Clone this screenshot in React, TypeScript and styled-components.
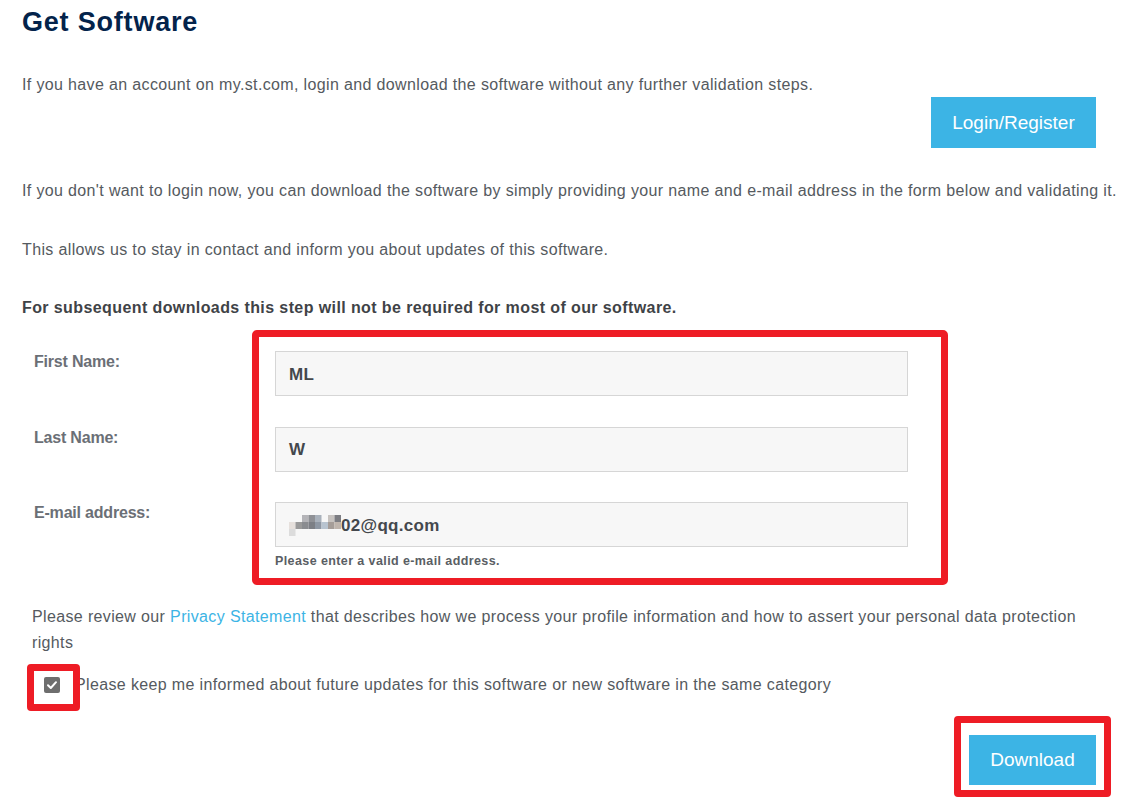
import React from "react";
import styled, { createGlobalStyle } from "styled-components";

const GlobalStyle = createGlobalStyle`
  html, body { margin: 0; padding: 0; background: #ffffff; }
  body { font-family: "Liberation Sans", Arial, sans-serif; color: #555a60; }
  * { box-sizing: border-box; }
`;

const RED = "#ee1c25";
const BLUE = "#3cb4e5";

const Page = styled.div`
  width: 1132px;
  padding: 7px 10px 30px 22px;
`;

const Title = styled.h1`
  margin: 0;
  font-size: 27px;
  line-height: 30px;
  font-weight: 700;
  letter-spacing: 0.8px;
  color: #03234b;
`;

const Text = styled.p<{ $top: number; $bold?: boolean }>`
  margin: ${(p) => p.$top}px 0 0 0;
  font-size: 16px;
  line-height: 20px;
  letter-spacing: ${(p) => (p.$bold ? 0.4 : 0.36)}px;
  font-weight: ${(p) => (p.$bold ? 700 : 400)};
  color: ${(p) => (p.$bold ? "#3f4347" : "#555a60")};
  white-space: nowrap;
`;

const ButtonRow = styled.div<{ $top: number }>`
  display: flex;
  justify-content: flex-end;
  margin-top: ${(p) => p.$top}px;
  padding-right: 26px;
`;

const PrimaryButton = styled.button<{ $w: number; $h: number }>`
  width: ${(p) => p.$w}px;
  height: ${(p) => p.$h}px;
  border: none;
  border-radius: 0;
  background: ${BLUE};
  color: #ffffff;
  font-family: "Liberation Sans", Arial, sans-serif;
  font-size: 19px;
  padding: 0;
  cursor: pointer;
`;

const FormSection = styled.div`
  display: flex;
  margin-top: 12px;
  padding-left: 12px;
`;

const LabelColumn = styled.div`
  width: 218px;
  padding-top: 22px;
  display: flex;
  flex-direction: column;
`;

const Label = styled.div`
  height: 75.5px;
  font-size: 16px;
  line-height: 20px;
  font-weight: 700;
  letter-spacing: -0.2px;
  color: #6b6f76;
`;

const HighlightBox = styled.div`
  width: 696px;
  border: 7px solid ${RED};
  border-radius: 5px;
  padding: 14px 33px 10px 16px;
  display: flex;
  flex-direction: column;
  gap: 30.5px;
`;

const Field = styled.div`
  display: flex;
  flex-direction: column;
`;

const Input = styled.div`
  height: 45px;
  width: 633px;
  background: #f7f7f7;
  border: 1px solid #d6d6d6;
  display: flex;
  align-items: center;
  padding: 2px 0 0 13px;
  font-size: 17px;
  letter-spacing: 0.3px;
  font-weight: 700;
  color: #44484d;
`;

const Mosaic = styled.svg`
  display: block;
  margin-right: 0;
`;

const Help = styled.div`
  margin-top: 7px;
  font-size: 12.5px;
  letter-spacing: 0.4px;
  line-height: 14px;
  font-weight: 700;
  color: #5a5e64;
`;

const Privacy = styled.p`
  margin: 19px 0 0 10px;
  font-size: 16px;
  line-height: 26px;
  letter-spacing: 0.36px;
  color: #555a60;
  width: 1080px;
`;

const Link = styled.a`
  color: ${BLUE};
  text-decoration: none;
`;

const ConsentRow = styled.label`
  display: flex;
  align-items: center;
  gap: 15px;
  margin-top: 19px;
  padding-left: 22px;
  font-size: 16px;
  line-height: 20px;
  letter-spacing: 0.36px;
  color: #555a60;
`;

const Annotated = styled.span<{ $t: number; $r: number; $b: number; $l: number }>`
  position: relative;
  display: inline-flex;
  &::after {
    content: "";
    position: absolute;
    top: ${(p) => -p.$t}px;
    right: ${(p) => -p.$r}px;
    bottom: ${(p) => -p.$b}px;
    left: ${(p) => -p.$l}px;
    border: 7px solid ${RED};
    border-radius: 4px;
    pointer-events: none;
  }
`;

const CheckBox = styled.span`
  width: 16px;
  height: 16px;
  border-radius: 2px;
  background: #6e6e6e;
  display: inline-flex;
  align-items: center;
  justify-content: center;
`;

const mosaicCells: [number, number, string][] = [
  [0, 1, "#e6e0dc"], [0, 2, "#dcdcdc"],
  [1, 1, "#9a9a9a"], [2, 1, "#8a8c90"], [2, 0, "#b4b4b8"],
  [3, 0, "#8f9196"], [3, 1, "#7c7f85"], [4, 0, "#a9b1bb"], [4, 1, "#8e97a3"],
  [5, 1, "#b8c4d0"], [6, 0, "#c7c3c0"], [6, 1, "#a59d98"], [7, 0, "#7c7d82"], [7, 1, "#bfb5ad"],
];

export default function App() {
  return (
    <>
      <GlobalStyle />
      <Page>
        <Title>Get Software</Title>
        <Text $top={38}>
          If you have an account on my.st.com, login and download the software without any further validation steps.
        </Text>
        <ButtonRow $top={2}>
          <PrimaryButton $w={165} $h={51}>Login/Register</PrimaryButton>
        </ButtonRow>
        <Text $top={33}>
          If you don't want to login now, you can download the software by simply providing your name and e-mail address in the form below and validating it.
        </Text>
        <Text $top={39}>
          This allows us to stay in contact and inform you about updates of this software.
        </Text>
        <Text $top={38} $bold>
          For subsequent downloads this step will not be required for most of our software.
        </Text>
        <FormSection>
          <LabelColumn>
            <Label>First Name:</Label>
            <Label>Last Name:</Label>
            <Label>E-mail address:</Label>
          </LabelColumn>
          <HighlightBox>
            <Field>
              <Input>ML</Input>
            </Field>
            <Field>
              <Input>W</Input>
            </Field>
            <Field>
              <Input>
                <Mosaic width="52" height="21" viewBox="0 0 52 21">
                  {mosaicCells.map(([c, r, fill], i) => (
                    <rect key={i} x={c * 6.5} y={r * 7} width="6.5" height="7" fill={fill} />
                  ))}
                </Mosaic>
                02@qq.com
              </Input>
              <Help>Please enter a valid e-mail address.</Help>
            </Field>
          </HighlightBox>
        </FormSection>
        <Privacy>
          Please review our <Link href="#">Privacy Statement</Link> that describes how we process your profile information and how to assert your personal data protection rights
        </Privacy>
        <ConsentRow>
          <Annotated $t={13} $r={20} $b={18} $l={17}>
            <CheckBox>
              <svg width="12" height="12" viewBox="0 0 12 12">
                <path d="M2 6.3 L4.8 9 L10 3.2" fill="none" stroke="#ffffff" strokeWidth="2" strokeLinecap="round" strokeLinejoin="round" />
              </svg>
            </CheckBox>
          </Annotated>
          Please keep me informed about future updates for this software or new software in the same category
        </ConsentRow>
        <ButtonRow $top={40}>
          <Annotated $t={19} $r={15} $b={12} $l={15}>
            <PrimaryButton $w={127} $h={50}>Download</PrimaryButton>
          </Annotated>
        </ButtonRow>
      </Page>
    </>
  );
}
